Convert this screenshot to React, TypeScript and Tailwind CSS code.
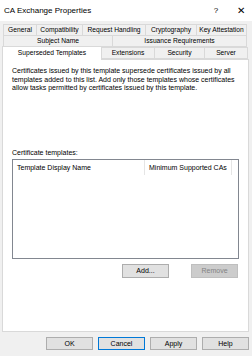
import React from "react";

const Tab = ({ label, w, selected }: { label: string; w: string; selected?: boolean }) => (
  <div
    className={`${w} flex items-center justify-center border border-[#d9d9d9] -ml-px first:ml-0 ${
      selected ? "h-[14px] bg-white border-b-0 relative z-10 -mb-px" : "h-[12px] bg-[#f0f0f0]"
    } text-[6.7px] leading-none text-black whitespace-nowrap overflow-hidden`}
  >
    {label}
  </div>
);

const Btn = ({ label, focused, disabled, h = "h-[14px]" }: { label: string; focused?: boolean; disabled?: boolean; h?: string }) => (
  <div
    className={`w-[47px] ${h} flex items-center justify-center text-[7px] leading-none border ${
      disabled
        ? "bg-[#cccccc] border-[#bfbfbf] text-[#838383]"
        : focused
        ? "bg-[#e1e1e1] border-[#0078d7] text-black"
        : "bg-[#e1e1e1] border-[#adadad] text-black"
    }`}
  >
    {label}
  </div>
);

export default function App() {
  return (
    <div
      className="w-[252px] h-[356px] bg-[#f0f0f0] flex flex-col overflow-hidden"
      style={{ fontFamily: '"Liberation Sans", Arial, sans-serif' }}
    >
      <div className="h-[21px] bg-white flex items-center pl-[4px] pr-[6px] text-[8px] text-black">
        <span className="flex-1">CA Exchange Properties</span>
        <span className="w-[12px] text-center mr-[14px]">?</span>
        <span className="w-[10px] text-center text-[10px] font-light">✕</span>
      </div>
      <div className="pl-[3px] pt-[3px] flex flex-col">
        <div className="flex">
          <Tab label="General" w="w-[34px]" />
          <Tab label="Compatibility" w="w-[47px]" />
          <Tab label="Request Handling" w="w-[64px]" />
          <Tab label="Cryptography" w="w-[52px]" />
          <Tab label="Key Attestation" w="w-[51px]" />
        </div>
        <div className="flex -mt-px">
          <Tab label="Subject Name" w="w-[110px]" />
          <Tab label="Issuance Requirements" w="w-[135px]" />
        </div>
      </div>
      <div className="pl-[2px] flex items-end -mt-px">
        <Tab label="Superseded Templates" w="w-[100px]" selected />
        <Tab label="Extensions" w="w-[54px]" />
        <Tab label="Security" w="w-[51px]" />
        <Tab label="Server" w="w-[44px]" />
      </div>
      <div className="ml-[2px] w-[247px] h-[273px] bg-white border border-[#d9d9d9] flex flex-col px-[9px] pt-[7px]">
        <p className="text-[7px] leading-[8.5px] text-black">
          Certificates issued by this template supersede certificates issued by all templates added to this list. Add only those templates whose certificates allow tasks permitted by certificates issued by this template.
        </p>
        <div className="mt-[56px] text-[7px] leading-[8px] text-black">Certificate templates:</div>
        <div className="mt-[2px] h-[100px] border border-[#828790] flex flex-col">
          <div className="flex h-[15px] items-center text-[7px] leading-none">
            <div className="w-[132px] h-full flex items-center pl-[4px] border-r border-[#e5e5e5]">Template Display Name</div>
            <div className="flex-1 h-full flex items-center pl-[4px] border-r border-[#e5e5e5]">Minimum Supported CAs</div>
            <div className="w-[6px]" />
          </div>
        </div>
        <div className="mt-[5px] flex justify-end gap-[22px] pr-[1px]">
          <Btn label="Add..." />
          <Btn label="Remove" disabled />
        </div>
      </div>
      <div className="mt-[5px] flex justify-end gap-[5px] pr-[3px]">
        <Btn label="OK" h="h-[13px]" />
        <Btn label="Cancel" focused h="h-[13px]" />
        <Btn label="Apply" h="h-[13px]" />
        <Btn label="Help" h="h-[13px]" />
      </div>
    </div>
  );
}
